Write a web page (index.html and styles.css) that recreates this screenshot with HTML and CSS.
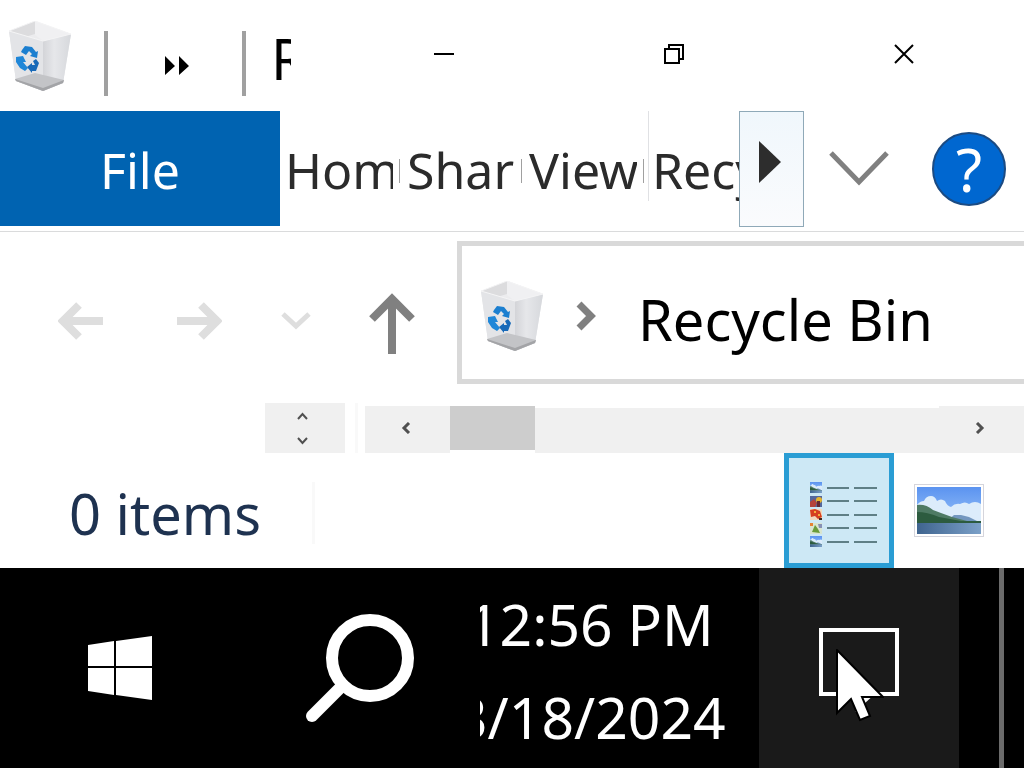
FILE: index.html
```html
<!DOCTYPE html>
<html lang="en">
  <head>
    <meta charset="utf-8">
    <title>Recycle Bin</title>
    <link rel="stylesheet" href="styles.css">
  </head>
  <body>
    <svg class="defs" aria-hidden="true">
      <defs>
        <linearGradient id="binSide" x1="0" y1="0" x2="1" y2="0">
          <stop offset="0" stop-color="#d3d4d8"/>
          <stop offset="0.4" stop-color="#e6e7ea"/>
          <stop offset="1" stop-color="#d6d8dc"/>
        </linearGradient>
        <linearGradient id="sky" x1="0" y1="0" x2="0" y2="1">
          <stop offset="0" stop-color="#5b93f0"/>
          <stop offset="1" stop-color="#a9d0fa"/>
        </linearGradient>
        <linearGradient id="lake" x1="0" y1="0" x2="1" y2="0">
          <stop offset="0" stop-color="#3f648f"/>
          <stop offset="1" stop-color="#7ba0c8"/>
        </linearGradient>
        <symbol id="bin" viewBox="0 0 62 70">
          <path d="M0 10 26 0 62 13 54 62 34 70 7 60z" fill="#e4e5e8"/>
          <path d="M0 10 26 0 62 13 34 20z" fill="#ececee"/>
          <path d="M0 10 26 0V13L16 16z" fill="#dcdcde"/>
          <path d="M26 0 62 13 34 20 26 14z" fill="#f0f0f2"/>
          <path d="M0 10 34 20V70L7 60z" fill="#e3e4e7"/>
          <path d="M34 20 62 13 54 62 34 70z" fill="url(#binSide)"/>
          <path d="M6 58 26 52 55 59 54 62 34 70 7 60z" fill="#c3c4c7"/>
          <path d="M6 58 34 67 55 59 54 62 34 70 7 60z" fill="#a3a4a7"/>
          <path d="M0 10 26 0 62 13 34 20z" fill="none" stroke="#f4f4f5"/>
          <path d="M13 29 16 25 23 26 27 31 29 30 28 37 21 35 23 33 20 30 17 34 12 31z" fill="#1b7fd0"/>
          <path d="M7 36 14 35 17 41 14 41 19 47 16 50 11 47 7 41z" fill="#1f87d8"/>
          <path d="M27 38 30 42 27 50 23 50 23 52 18 46 23 42 23 44 26 44 24 40z" fill="#1769b8"/>
        </symbol>
        <symbol id="photo" viewBox="0 0 64 47" preserveAspectRatio="none">
          <path d="M0 0h64v47H0z" fill="url(#sky)"/>
          <path d="M0 18Q3 14 7 14 9 9 14 9 18 9 20 14 24 11 28 14 30 19 34 20 38 16 43 17 48 14 52 17 58 13 64 17V36H0z" fill="#dcecfb"/>
          <path d="M30 34 37 28 44 28 52 30 60 34z" fill="#7397bf"/>
          <path d="M0 18Q9 17 16 23L24 26 35 30 50 34 64 34V36H0z" fill="#4e7a64"/>
          <path d="M0 25Q10 25 22 30L33 32 44 34 64 34V36H0z" fill="#2c5b3f"/>
          <path d="M0 36h64v11H0z" fill="url(#lake)"/>
        </symbol>
      </defs>
    </svg>

    <div class="window">
      <header class="title-bar">
        <svg class="bin-icon"><use href="#bin"/></svg>
        <span class="divider"></span>
        <button class="quick-access" aria-label="Customize Quick Access Toolbar">
          <svg width="24" height="20" viewBox="0 0 24 20"><path d="M0 0 10 10 0 19zM14 0 24 10 14 19z"/></svg>
        </button>
        <span class="divider"></span>
        <h1 class="window-title">Recycle Bin</h1>
        <div class="window-controls">
          <button aria-label="Minimize"><svg width="20" height="20"><path d="M0 10h20"/></svg></button>
          <button aria-label="Restore"><svg width="20" height="20"><path d="M1 5h14v14H1zM5 5V1h14v14h-4"/></svg></button>
          <button aria-label="Close"><svg width="20" height="20"><path d="M1 1 19 19M19 1 1 19"/></svg></button>
        </div>
      </header>

      <div class="ribbon">
        <button class="file-tab">File</button>
        <button class="tab"><span>Home</span></button>
        <button class="tab"><span>Share</span></button>
        <button class="tab"><span>View</span></button>
        <button class="tab-context"><span>Recycle Bin Tools</span></button>
        <button class="tab-scroll" aria-label="Scroll tabs">
          <svg width="22" height="42" viewBox="0 0 22 42"><path d="M0 0 22 21 0 42z"/></svg>
        </button>
        <button class="expand" aria-label="Expand the Ribbon">
          <svg width="60" height="36" viewBox="0 0 60 36"><path d="M2 2 30 31 58 2"/></svg>
        </button>
        <button class="help" aria-label="Help">?</button>
      </div>

      <nav class="nav-bar">
        <button class="arrow" aria-label="Back" disabled>
          <svg width="46" height="38" viewBox="0 0 46 38"><path d="M5 19H45M21 3 5 19 21 35"/></svg>
        </button>
        <button class="arrow" aria-label="Forward" disabled>
          <svg width="46" height="38" viewBox="0 0 46 38"><path d="M1 19H41M25 3 41 19 25 35"/></svg>
        </button>
        <button class="recent" aria-label="Recent locations" disabled>
          <svg width="30" height="20" viewBox="0 0 30 20"><path d="M2 3 15 15 28 3"/></svg>
        </button>
        <button class="up" aria-label="Up">
          <svg width="46" height="62" viewBox="0 0 46 62"><path d="M23 6V61M3 26 23 6 43 26"/></svg>
        </button>
        <div class="address">
          <svg class="bin-icon"><use href="#bin"/></svg>
          <svg class="crumb-arrow" width="20" height="30" viewBox="0 0 20 30"><path d="M3 3 15 15 3 27"/></svg>
          <a class="crumb" href="#">Recycle Bin</a>
        </div>
      </nav>

      <div class="scroll-row">
        <div class="spinner">
          <button aria-label="Scroll up"><svg width="11" height="8"><path d="M1 7 5.500 2 10 7"/></svg></button>
          <button aria-label="Scroll down"><svg width="11" height="8"><path d="M1 1 5.500 6 10 1"/></svg></button>
        </div>
        <span class="pane-edge"></span>
        <div class="scrollbar">
          <button class="scroll-button" aria-label="Scroll left"><svg width="10" height="12"><path d="M8 1 3 6 8 11"/></svg></button>
          <div class="thumb"></div>
          <div class="track"></div>
          <button class="scroll-button" aria-label="Scroll right"><svg width="10" height="12"><path d="M2 1 7 6 2 11"/></svg></button>
        </div>
      </div>

      <footer class="status-bar">
        <span class="item-count">0 items</span>
        <div class="view-buttons">
          <button class="details" aria-label="Details view">
            <svg width="68" height="66" viewBox="0 0 68 66">
              <use href="#photo" x="0" y="0" width="12" height="11"/>
              <path d="M0 14h12v11H0z" fill="#54679c"/>
              <path d="M0 20 4 17 7 21 5 25H0z" fill="#b4433b"/>
              <circle cx="9" cy="18" r="3" fill="#e7b42c"/>
              <path d="M7 19h3v6H7z" fill="#632a32"/>
              <path d="M0 27h12v11H0z" fill="#f1d9bd"/>
              <path d="M0 28 5 27 10 29 12 35 8 37 5 34 1 35z" fill="#d5401f"/>
              <path d="M4 29h2v2H4zM8 32h2v2H8z" fill="#f4b13a"/>
              <path d="M9 36h3v2H9z" fill="#40291f"/>
              <path d="M0 41h12v11H0z" fill="#d9e5cf"/>
              <path d="M2 50 5 43 8 47 10 51z" fill="#6a9c3a"/>
              <path d="M0 41h3v3H0z" fill="#e68332"/>
              <path d="M8 42h4v4H9z" fill="#8791b5"/>
              <use href="#photo" x="0" y="54" width="12" height="11"/>
              <path class="rows" d="M17 6H39M44 6H67M17 19H39M44 19H67M17 33H39M44 33H67M17 46H39M44 46H67M17 60H39M44 60H67"/>
            </svg>
          </button>
          <button class="thumbnails" aria-label="Large icons view">
            <svg width="64" height="47"><use href="#photo" width="64" height="47"/></svg>
          </button>
        </div>
      </footer>
    </div>

    <div class="taskbar">
      <button class="task-button" aria-label="Start">
        <svg width="64" height="64" viewBox="0 0 64 64" fill="#fff"><path d="M0 9 26 5V30H0zM28 5 64 0V30H28zM0 32H26V59L0 55zM28 32H64V64L28 59z"/></svg>
      </button>
      <button class="task-button" aria-label="Search">
        <svg width="108" height="108" viewBox="0 0 108 108" fill="none" stroke="#fff"><circle cx="64" cy="44" r="38" stroke-width="12"/><path d="M37 71 6 102" stroke-width="12" stroke-linecap="round"/></svg>
      </button>
      <div class="clock">
        <div class="clock-text">
          <time>12:56 PM</time>
          <time>3/18/2024</time>
        </div>
      </div>
      <button class="notifications" aria-label="Notifications">
        <svg class="bubble" width="80" height="84" viewBox="0 0 80 84"><path d="M2 2H78V66H2z" fill="none" stroke="#fff" stroke-width="4"/><path d="M36 66H56L36 84z" fill="#fff"/></svg>
        <svg class="cursor" width="48" height="74" viewBox="0 0 48 74"><path d="M1 1V64L15 50 24 71 34 67 26 48H47z" fill="#fff" stroke="#000" stroke-width="2"/></svg>
      </button>
      <button class="show-desktop" aria-label="Show desktop"></button>
    </div>
  </body>
</html>
```
FILE: styles.css
```css
* {
  box-sizing: border-box;
}

body {
  margin: 0;
  min-height: 100vh;
  display: flex;
  flex-direction: column;
  font-family: "Noto Sans", "Open Sans", sans-serif;
  background: #fff;
  overflow-x: hidden;
}

button {
  padding: 0;
  border: none;
  background: none;
  font-family: inherit;
  color: inherit;
}

svg {
  display: block;
  flex: none;
}

.defs {
  position: absolute;
  width: 0;
  height: 0;
}

.bin-icon {
  width: 62px;
  height: 70px;
}

/* title bar */
.title-bar {
  display: flex;
  align-items: center;
  height: 111px;
  padding: 0 5px 0 9px;
}

.title-bar .divider {
  width: 4px;
  height: 65px;
  margin-top: 16px;
  background: #a0a0a0;
}

.title-bar .bin-icon {
  margin-right: 33px;
}

.quick-access {
  display: flex;
  justify-content: center;
  width: 134px;
  padding: 21px 0 0 3px;
}

.window-title {
  width: 20px;
  margin: 4px 0 0 25px;
  overflow: hidden;
  white-space: nowrap;
  font-size: 56px;
  font-weight: normal;
  line-height: 80px;
}

.window-controls {
  display: flex;
  margin-left: auto;
}

.window-controls button {
  display: flex;
  justify-content: center;
  align-items: center;
  width: 230px;
  height: 111px;
  padding-bottom: 3px;
}

.window-controls path {
  fill: none;
  stroke: #000;
  stroke-width: 2;
}

/* ribbon */
.ribbon {
  display: flex;
  height: 121px;
  border-bottom: 1px solid #dadbdc;
  color: #2b2b2b;
}

.ribbon button {
  font-size: 50px;
  line-height: 119px;
}

.ribbon .file-tab {
  width: 280px;
  height: 115px;
  background: #0063b1;
  color: #fff;
}

.tab {
  display: flex;
  align-items: center;
  width: 122px;
  height: 119px;
  padding: 0 2px 0 5px;
}

.tab span {
  width: 108px;
  overflow: hidden;
  text-align: left;
}

.tab::after {
  content: "";
  width: 1px;
  height: 24px;
  margin-left: 6px;
  background: #a0a0a0;
}

.tab-context {
  flex: 1;
  min-width: 0;
  height: 90px;
  margin-left: 2px;
  border-left: 1px solid #e0e1e4;
}

.tab-context span {
  display: block;
  padding-left: 3px;
  overflow: hidden;
  white-space: nowrap;
  text-align: left;
}

.tab-scroll {
  display: flex;
  width: 65px;
  height: 116px;
  padding: 29px 0 0 19px;
  border: 1px solid #8fa9b8;
  background: linear-gradient(#f0f7fc, #fafbfd);
}

.tab-scroll path {
  fill: #2d2d2d;
}

.expand {
  display: flex;
  align-items: center;
  justify-content: center;
  width: 110px;
  height: 115px;
}

.expand path {
  fill: none;
  stroke: #808080;
  stroke-width: 5;
}

.ribbon .help {
  width: 74px;
  height: 74px;
  margin: 21px 18px 0 18px;
  border: 2px solid #1b4b83;
  border-radius: 50%;
  background: #0067d0;
  color: #fff;
  font-size: 60px;
  line-height: 68px;
}

/* navigation */
.nav-bar {
  display: flex;
  align-items: center;
  height: 171px;
  padding-left: 58px;
}

.nav-bar path {
  fill: none;
  stroke: #808080;
  stroke-width: 8;
}

.arrow {
  margin: 7px 72px 0 0;
}

.nav-bar .arrow path {
  stroke: #dedede;
}

.recent {
  margin: 7px 58px 0 -13px;
}

.nav-bar .recent path {
  stroke: #dedede;
  stroke-width: 5;
}

.up {
  margin: 13px 42px 0 0;
}

.address {
  flex: 1;
  display: flex;
  align-items: center;
  height: 143px;
  margin-bottom: 10px;
  padding-left: 19px;
  border: 5px solid #d9d9d9;
  border-right: none;
}

.address .bin-icon {
  margin-top: 6px;
}

.crumb-arrow {
  margin: 6px 0 0 33px;
}

.nav-bar .crumb-arrow path {
  stroke-width: 7;
}

.crumb {
  margin: 12px 0 0 42px;
  font-size: 56px;
  line-height: 80px;
  white-space: nowrap;
  color: #000;
  text-decoration: none;
}

/* scroll bars */
.scroll-row {
  display: flex;
  height: 50px;
  padding-left: 265px;
}

.scroll-row path {
  fill: none;
  stroke: #505050;
  stroke-width: 2;
}

.spinner {
  display: flex;
  flex-direction: column;
  align-items: center;
  justify-content: center;
  gap: 17px;
  width: 80px;
  padding-right: 5px;
  background: #f0f0f0;
}

.pane-edge {
  width: 3px;
  margin: 0 7px 0 10px;
  background: #f9f9f9;
}

.scrollbar {
  flex: 1;
  display: flex;
  height: 47px;
  margin-top: 3px;
}

.scroll-button {
  display: flex;
  align-items: center;
  justify-content: center;
  width: 85px;
  padding: 0 3px 3px 0;
  background: #f0f0f0;
}

.scroll-row .scroll-button path {
  stroke-width: 3;
}

.thumb {
  width: 85px;
  height: 44px;
  background: #cdcdcd;
}

.track {
  flex: 1;
  margin-top: 2px;
  background: #f0f0f0;
}

/* status bar */
.status-bar {
  display: flex;
  align-items: center;
  height: 115px;
  padding: 0 40px 0 69px;
}

.item-count {
  width: 246px;
  border-right: 3px solid #f9f9f9;
  margin-top: 4px;
  font-size: 56px;
  line-height: 62px;
  white-space: nowrap;
  color: #1e3250;
}

.view-buttons {
  display: flex;
  align-items: center;
  gap: 20px;
  margin-left: auto;
}

.details {
  display: flex;
  justify-content: center;
  width: 110px;
  height: 115px;
  padding: 24px 0 0 10px;
  border: 5px solid #2a9dd4;
  background: #cde8f5;
}

.rows {
  fill: none;
  stroke: #5f7f86;
  stroke-width: 2;
}

.thumbnails {
  padding: 2px;
  border: 1px solid #d5d5dc;
}

/* taskbar */
.taskbar {
  flex: 1;
  display: flex;
  min-height: 200px;
  background: #000;
  color: #fff;
}

.task-button {
  display: flex;
  align-items: center;
  justify-content: center;
  width: 240px;
}

.clock {
  flex: 1;
  display: flex;
  align-items: center;
  min-width: 0;
  overflow: hidden;
}

.clock-text {
  display: flex;
  flex-direction: column;
  align-items: center;
  margin: 6px 0 0 -25px;
  font-size: 57px;
  line-height: 93px;
  white-space: nowrap;
}

.notifications {
  position: relative;
  display: flex;
  justify-content: center;
  width: 200px;
  padding-top: 60px;
  background: #1a1a1a;
}

.cursor {
  position: absolute;
  left: 77px;
  top: 81px;
}

.show-desktop {
  width: 65px;
  padding-left: 40px;
}

.show-desktop::before {
  content: "";
  display: block;
  width: 5px;
  height: 100%;
  background: #6b6b6b;
}
```
